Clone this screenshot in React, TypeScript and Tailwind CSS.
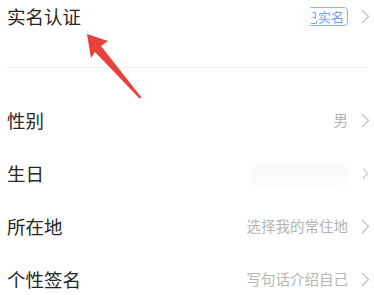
const font = { fontFamily: '"Noto Sans CJK SC", "Noto Sans", sans-serif' };

const Chevron = ({ className = "" }: { className?: string }) => (
  <svg viewBox="0 0 9 15" className={`w-[9px] h-[15px] ${className}`} fill="none">
    <path d="M1.5 1.5 L7.5 7.5 L1.5 13.5" stroke="#c9c9c9" strokeWidth="1.6" strokeLinecap="round" strokeLinejoin="round" />
  </svg>
);

const Row = ({ label, value, blurred }: { label: string; value?: string; blurred?: boolean }) => (
  <div className="h-[53px] flex items-center justify-between pl-[7px] pr-[4px]">
    <span className="text-[18.5px] text-[#262626] leading-none">{label}</span>
    <div className="flex items-center gap-[13px]">
      {blurred ? (
        <div className="w-[98px] h-[22px] rounded-sm bg-[#fafafa] blur-[3px]" />
      ) : (
        <span className="text-[14.5px] text-[#b4b4b4] leading-none">{value}</span>
      )}
      <Chevron className={blurred ? "blur-[1px] scale-75" : ""} />
    </div>
  </div>
);

export default function App() {
  return (
    <div className="relative w-[374px] h-[295px] bg-white overflow-hidden" style={font}>
      <div className="h-[32px] flex items-center justify-between pl-[7px] pr-[4px]">
        <span className="text-[18.5px] text-[#262626] leading-none">实名认证</span>
        <div className="flex items-center gap-[13px]">
          <div className="relative">
            <span className="block border border-[#8ab6f2] rounded-[4px] px-[3px] text-[13px] leading-[17px] text-[#6ea2ec]">
              已实名
            </span>
            <div className="absolute -left-[50px] -top-[6px] w-[62px] h-[30px] bg-white/80 backdrop-blur-[3px] rounded-full" />
          </div>
          <Chevron />
        </div>
      </div>
      <div className="h-[35px]" />
      <div className="mx-[7px] border-t border-[#f1f1f1]" />
      <div className="h-[26px]" />
      <Row label="性别" value="男" />
      <Row label="生日" blurred />
      <Row label="所在地" value="选择我的常住地" />
      <Row label="个性签名" value="写句话介绍自己" />

      <svg className="absolute left-0 top-0 pointer-events-none" width="374" height="295">
        <polygon
          points="87,34 108,41 101,46 141.5,97.5 139.5,98.5 95,52 91,58"
          fill="#e8423d"
        />
      </svg>
    </div>
  );
}
